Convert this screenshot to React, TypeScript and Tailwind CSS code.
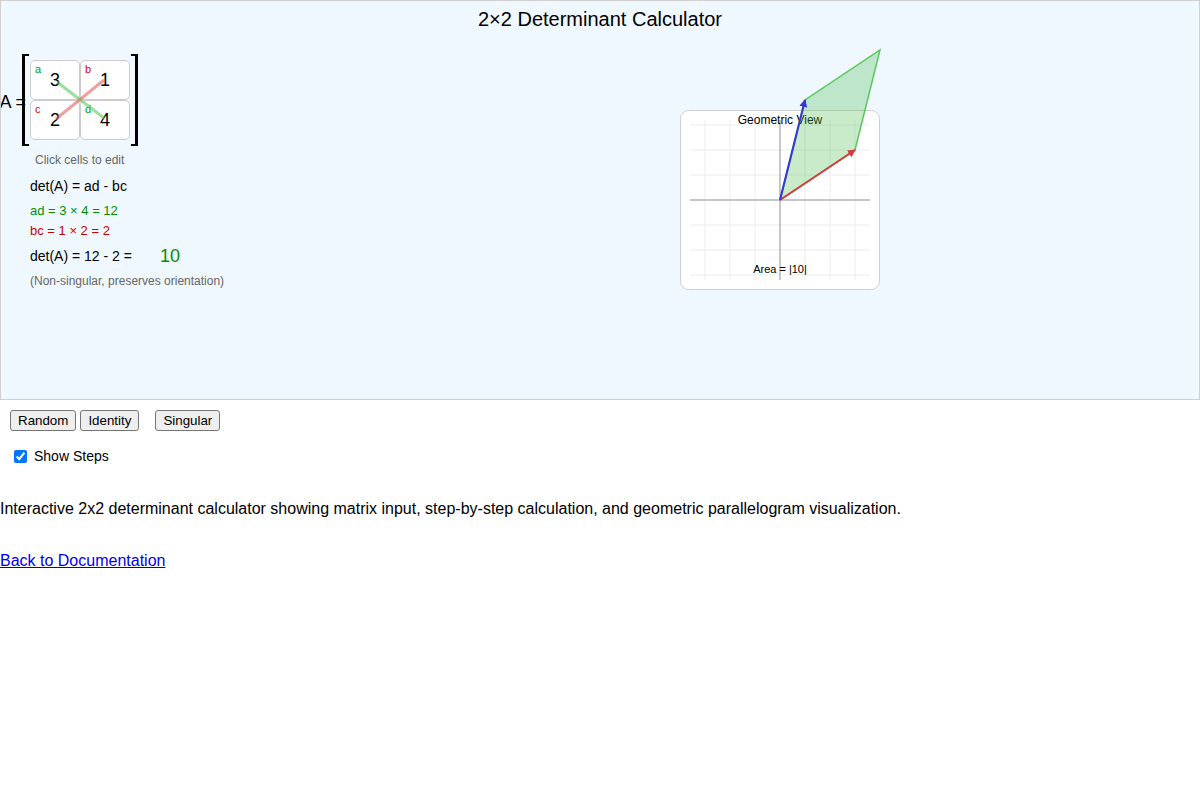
import React from 'react';

// entries of the matrix, laid out a b / c d
const cells = [
  { label: 'a', value: 3, labelColor: 'text-[#00a000]' },
  { label: 'b', value: 1, labelColor: 'text-[#dd0000]' },
  { label: 'c', value: 2, labelColor: 'text-[#dd0000]' },
  { label: 'd', value: 4, labelColor: 'text-[#00a000]' },
];

function Bracket({ side }: { side: 'left' | 'right' }) {
  return (
    <div
      className={
        side === 'left'
          ? 'relative z-10 w-[7px] h-[92px] border-l-[3px] border-t-2 border-b-2 border-black'
          : 'w-[7px] h-[92px] border-r-[3px] border-t-2 border-b-2 border-black'
      }
    />
  );
}

function MatrixInput() {
  return (
    <div className="flex items-center h-[92px]">
      <div className="w-[21px] flex justify-end">
        <span className="whitespace-nowrap text-[18px] leading-[20px] mt-[3px] mr-[-4px]">A =</span>
      </div>
      <Bracket side="left" />
      <div className="relative grid grid-cols-2 w-[100px] mx-[1px]">
        {cells.map((c) => (
          <div
            key={c.label}
            className="relative h-[40px] w-[50px] bg-white border border-[#cccccc] rounded-[5px] flex items-center justify-center"
          >
            <span className={`absolute left-[4px] top-[2px] text-[11px] leading-[12px] ${c.labelColor}`}>{c.label}</span>
            <span className="text-[18px] leading-[20px] text-black">{c.value}</span>
          </div>
        ))}
        <svg className="absolute left-0 top-0 pointer-events-none" width="100" height="80">
          <line x1="27" y1="22" x2="74" y2="58" stroke="#5ec85e" strokeOpacity="0.6" strokeWidth="3" />
          <line x1="26" y1="59" x2="74" y2="20" stroke="#e06060" strokeOpacity="0.6" strokeWidth="3" />
        </svg>
      </div>
      <Bracket side="right" />
    </div>
  );
}

function GeometricView() {
  const grid = [705, 730, 755, 805, 830, 855];
  const rows = [125, 150, 175, 225, 250, 275];
  return (
    <svg width="200" height="260" viewBox="680 40 200 260" className="overflow-visible">
      <defs>
        <marker id="arrRed" markerWidth="8" markerHeight="8" refX="7" refY="4" orient="auto" markerUnits="userSpaceOnUse">
          <path d="M0,0 L8,4 L0,8 z" fill="#d63a3a" />
        </marker>
        <marker id="arrBlue" markerWidth="8" markerHeight="8" refX="7" refY="4" orient="auto" markerUnits="userSpaceOnUse">
          <path d="M0,0 L8,4 L0,8 z" fill="#3535d8" />
        </marker>
      </defs>
      <rect x="680.5" y="110.5" width="199" height="179" rx="8" fill="white" stroke="#d0d0d0" />
      {grid.map((x) => (
        <line key={'v' + x} x1={x} y1="120" x2={x} y2="280" stroke="#ececec" strokeWidth="1" />
      ))}
      {rows.map((y) => (
        <line key={'h' + y} x1="690" y1={y} x2="870" y2={y} stroke="#ececec" strokeWidth="1" />
      ))}
      <line x1="690" y1="200" x2="870" y2="200" stroke="#b4b4b4" strokeWidth="1.5" />
      <line x1="780" y1="120" x2="780" y2="280" stroke="#b4b4b4" strokeWidth="1.5" />
      <text x="780" y="124" textAnchor="middle" fontSize="12" fontFamily="'Liberation Sans', Arial, sans-serif" fill="#000">
        Geometric View
      </text>
      <polygon
        points="780,200 855,150 880,50 805,100"
        fill="rgba(76,190,80,0.3)"
        stroke="#5cc85c"
        strokeWidth="1.5"
      />
      <line x1="780" y1="200" x2="855" y2="150" stroke="#d63a3a" strokeWidth="2" markerEnd="url(#arrRed)" />
      <line x1="780" y1="200" x2="805" y2="100" stroke="#3535d8" strokeWidth="2" markerEnd="url(#arrBlue)" />
      <text x="780" y="273" textAnchor="middle" fontSize="11" fontFamily="'Liberation Sans', Arial, sans-serif" fill="#000">
        Area = |10|
      </text>
    </svg>
  );
}

export default function App() {
  return (
    <div className="font-['Liberation_Sans',Arial,sans-serif] text-black bg-white min-h-[800px]">
      <div className="h-[400px] bg-[#f0f8ff] border border-[#d0d0d0] overflow-hidden">
        <div className="h-[39px] pt-[6px] text-center text-[20px] leading-[24px]">2×2 Determinant Calculator</div>
        <div className="flex">
          <div className="w-[240px] pt-[14px]">
            <MatrixInput />
            <div className="mt-[4px] pl-[34px] text-[12px] leading-[20px] text-[#666666]">Click cells to edit</div>
            <div className="mt-[6px] pl-[29px] text-[14px] leading-[20px]">det(A) = ad - bc</div>
            <div className="mt-[5px] pl-[29px] text-[13px] leading-[20px] text-[#009000]">ad = 3 × 4 = 12</div>
            <div className="pl-[29px] text-[13px] leading-[20px] text-[#cc0000]">bc = 1 × 2 = 2</div>
            <div className="mt-[5px] pl-[29px] flex items-center h-[20px]">
              <span className="text-[14px] w-[130px]">det(A) = 12 - 2 =</span>
              <span className="text-[18px] text-[#009000]">10</span>
            </div>
            <div className="mt-[5px] pl-[29px] text-[12px] leading-[20px] text-[#666666]">(Non-singular, preserves orientation)</div>
          </div>
          <div className="ml-[439px]">
            <GeometricView />
          </div>
        </div>
      </div>

      <div className="flex mt-[10px] pl-[10px] text-[13.33px]">
        <button className="h-[21px] px-[7px] bg-[#efefef] border border-[#767676] rounded-[3px]">Random</button>
        <button className="ml-[4px] h-[21px] px-[7px] bg-[#efefef] border border-[#767676] rounded-[3px]">Identity</button>
        <button className="ml-[16px] h-[21px] px-[7px] bg-[#efefef] border border-[#767676] rounded-[3px]">Singular</button>
      </div>

      <label className="flex items-center mt-[15px] pl-[10px] h-[20px] text-[14px]">
        <input type="checkbox" defaultChecked className="ml-[4px] mr-[3px] w-[13px] h-[13px]" />
        <span className="ml-[4px]">Show Steps</span>
      </label>

      <p className="mt-[34px] text-[16px] leading-[18px]">
        Interactive 2x2 determinant calculator showing matrix input, step-by-step calculation, and geometric parallelogram visualization.
      </p>

      <a href="#" className="block mt-[34px] text-[16px] leading-[18px] text-[#0000ee] underline w-fit">
        Back to Documentation
      </a>
    </div>
  );
}
